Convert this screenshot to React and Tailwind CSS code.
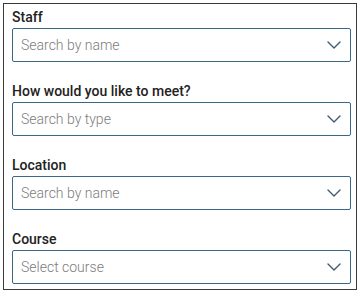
import React from "react";

const fields = [
  { label: "Staff", placeholder: "Search by name" },
  { label: "How would you like to meet?", placeholder: "Search by type" },
  { label: "Location", placeholder: "Search by name" },
  { label: "Course", placeholder: "Select course" },
];

// 드롭다운 화살표
const Chevron = () => (
  <svg width="14" height="8" viewBox="0 0 14 8" fill="none" className="shrink-0">
    <path d="M1 1l6 6 6-6" stroke="#3d5b75" strokeWidth="1.4" strokeLinecap="round" strokeLinejoin="round" />
  </svg>
);

const Field = ({ label, placeholder }) => (
  <div className="flex flex-col">
    <label className="text-[14px] leading-[20px] font-medium text-[#222] mb-[1px]">{label}</label>
    <button
      type="button"
      className="w-[339px] h-[34px] border border-[#3a6888] rounded-[2px] bg-white flex items-center justify-between pl-[8px] pr-[9px] text-left"
    >
      <span className="text-[14px] font-light text-[#7c7c7c]">{placeholder}</span>
      <Chevron />
    </button>
  </div>
);

export default function App() {
  return (
    <div className="w-[361px] h-[294px] bg-white pt-[3px] pl-[3px]" style={{ fontFamily: "Roboto, 'Noto Sans', sans-serif" }}>
      <div className="w-[354px] h-[287px] border border-[#3a3a3a] pt-[3px] pl-[8px] flex flex-col gap-[19px]">
        {fields.map((f) => (
          <Field key={f.label} label={f.label} placeholder={f.placeholder} />
        ))}
      </div>
    </div>
  );
}
